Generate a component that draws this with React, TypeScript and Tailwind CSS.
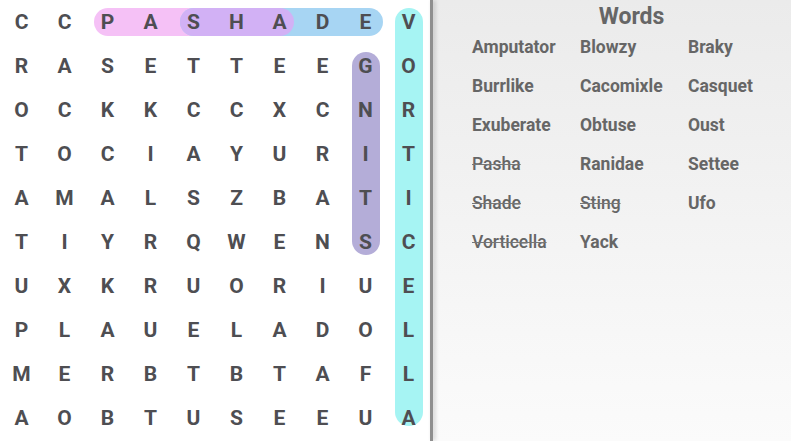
const GRID = [
  "CCPASHADEV",
  "RASETTEEGO",
  "OCKKCCXCNR",
  "TOCIAYURIT",
  "AMALSZBATI",
  "TIYRQWENSC",
  "UXKRUORIUE",
  "PLAUELADOL",
  "MERBTBTAFL",
  "AOBTUSEEUA",
];

const WORDS: { text: string; found?: boolean }[] = [
  { text: "Amputator" },
  { text: "Blowzy" },
  { text: "Braky" },
  { text: "Burrlike" },
  { text: "Cacomixle" },
  { text: "Casquet" },
  { text: "Exuberate" },
  { text: "Obtuse" },
  { text: "Oust" },
  { text: "Pasha", found: true },
  { text: "Ranidae" },
  { text: "Settee" },
  { text: "Shade", found: true },
  { text: "Sting", found: true },
  { text: "Ufo" },
  { text: "Vorticella", found: true },
  { text: "Yack" },
];

const Board = () => (
  <div className="relative w-[430px] h-[441px] bg-white shrink-0">
    {/* found-word marks */}
    <div className="absolute left-[94px] top-[8px] w-[200px] h-[28px] rounded-full bg-[#f5c1f6]" />
    <div className="absolute left-[180px] top-[8px] w-[203px] h-[28px] rounded-full bg-[#a7d5f3]" />
    <div className="absolute left-[180px] top-[8px] w-[114px] h-[28px] rounded-full bg-[#d2b1f5]" />
    <div className="absolute left-[352px] top-[52px] w-[28px] h-[203px] rounded-full bg-[#b4add8]" />
    <div className="absolute left-[395px] top-[8px] w-[28px] h-[418px] rounded-full bg-[#a6f4f3]" />

    <div className="relative grid grid-cols-[repeat(10,43px)] grid-rows-[repeat(10,44px)]">
      {GRID.flatMap((row, r) =>
        row.split("").map((ch, c) => (
          <div
            key={`${r}-${c}`}
            className="flex items-center justify-center text-[21px] font-bold text-[#4e4e52] leading-none"
          >
            {ch}
          </div>
        ))
      )}
    </div>
  </div>
);

const WordList = () => (
  <div className="flex-1 min-w-0 h-[441px] bg-gradient-to-b from-[#ebebeb] to-[#fbfbfb] pl-[39px]">
    <h2 className="h-[34px] pt-[3px] text-center text-[23px] font-bold text-[#666] leading-[28px]">
      Words
    </h2>
    <div className="grid grid-cols-[108px_108px_108px] auto-rows-[39px] -mt-[6px]">
      {WORDS.map((w) => (
        <div
          key={w.text}
          className={
            "flex items-center text-[17.5px] text-[#666] whitespace-nowrap " +
            (w.found ? "line-through decoration-[#777] decoration-1 font-medium" : "font-bold")
          }
        >
          {w.text}
        </div>
      ))}
    </div>
  </div>
);

export default function App() {
  return (
    <div className="flex w-[791px] h-[441px] overflow-hidden font-['Roboto',sans-serif]">
      <Board />
      <div className="relative z-10 shrink-0 w-[3px] h-[441px] bg-[#8f8f8f] shadow-[2px_0_4px_rgba(0,0,0,0.2)]" />
      <WordList />
    </div>
  );
}
